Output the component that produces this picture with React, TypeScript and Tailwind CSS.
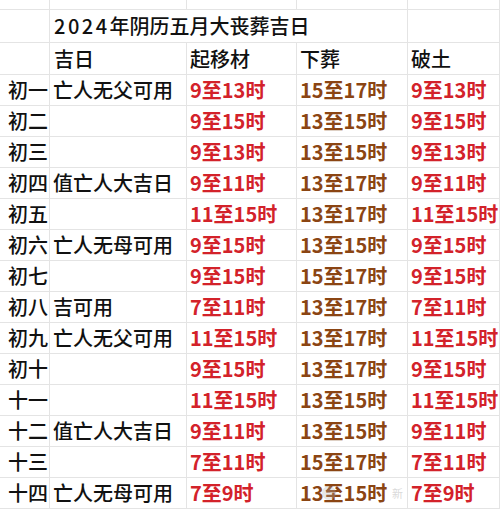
import React from "react";

type Row = { d: string; note: string; a: string; b: string; c: string };

const rows: Row[] = [
  { d: "初一", note: "亡人无父可用", a: "9至13时", b: "15至17时", c: "9至13时" },
  { d: "初二", note: "", a: "9至15时", b: "13至15时", c: "9至15时" },
  { d: "初三", note: "", a: "9至13时", b: "13至15时", c: "9至13时" },
  { d: "初四", note: "值亡人大吉日", a: "9至11时", b: "13至17时", c: "9至11时" },
  { d: "初五", note: "", a: "11至15时", b: "13至17时", c: "11至15时" },
  { d: "初六", note: "亡人无母可用", a: "9至15时", b: "13至15时", c: "9至15时" },
  { d: "初七", note: "", a: "9至15时", b: "15至17时", c: "9至15时" },
  { d: "初八", note: "吉可用", a: "7至11时", b: "13至17时", c: "7至11时" },
  { d: "初九", note: "亡人无父可用", a: "11至15时", b: "13至17时", c: "11至15时" },
  { d: "初十", note: "", a: "9至15时", b: "13至17时", c: "9至15时" },
  { d: "十一", note: "", a: "11至15时", b: "13至15时", c: "11至15时" },
  { d: "十二", note: "值亡人大吉日", a: "9至11时", b: "13至15时", c: "9至11时" },
  { d: "十三", note: "", a: "7至11时", b: "15至17时", c: "7至11时" },
  { d: "十四", note: "亡人无母可用", a: "7至9时", b: "13至15时", c: "7至9时" },
];

const cell = "border-b border-r border-[#e4e4e4] flex items-center whitespace-nowrap overflow-visible";

export default function App() {
  return (
    <div
      className="w-[500px] h-[511px] bg-white overflow-hidden relative text-[20px] leading-none text-[#111]"
      style={{ fontFamily: '"Noto Sans CJK SC", "Noto Sans", sans-serif' }}
    >
      <div className="grid grid-cols-[50px_137px_110px_111px_92px] grid-rows-[10px_33px_32px_repeat(14,31px)]">
        {/* top partial row */}
        <div className={cell} />
        <div className={cell} />
        <div className={cell} />
        <div className={cell} />
        <div className={cell} />
        {/* title row */}
        <div className={cell} />
        <div className={`${cell} col-span-3 pl-[4px] font-medium`}>
          <span className="tracking-[2.5px]">2024</span>
          <span>年阴历五月大丧葬吉日</span>
        </div>
        <div className={cell} />
        {/* header row */}
        <div className={cell} />
        <div className={`${cell} pl-[4px] font-medium`}>吉日</div>
        <div className={`${cell} pl-[3px] font-medium`}>起移材</div>
        <div className={`${cell} pl-[3px] font-medium`}>下葬</div>
        <div className={`${cell} pl-[3px] font-medium`}>破土</div>
        {rows.map((r) => (
          <React.Fragment key={r.d}>
            <div className={`${cell} pl-[8px] font-medium`}>{r.d}</div>
            <div className={`${cell} pl-[3px] font-medium`}>{r.note}</div>
            <div className={`${cell} pl-[3px] font-bold text-[#d3222a]`}>{r.a}</div>
            <div className={`${cell} pl-[3px] font-bold text-[#8b4513]`}>{r.b}</div>
            <div className={`${cell} pl-[3px] font-bold text-[#d3222a]`}>{r.c}</div>
          </React.Fragment>
        ))}
      </div>
      <div className="absolute left-[322px] top-[486px] w-[14px] h-[14px] rounded-full bg-[#b0b0b0]/30" />
      <div className="absolute left-[392px] top-[488px] text-[11px] leading-none text-[#cfcfcf]/80">新</div>
    </div>
  );
}
